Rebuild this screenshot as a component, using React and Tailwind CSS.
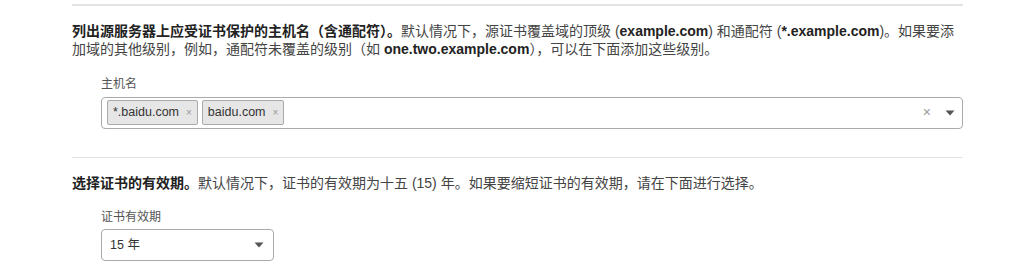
import React from "react";

const font = { fontFamily: '"Liberation Sans", "Noto Sans CJK SC", sans-serif' };

function Caret() {
  return (
    <svg width="10" height="6" viewBox="0 0 10 6" className="block">
      <path d="M0.5 0.5 L9.5 0.5 L5 5.5 Z" fill="#555" />
    </svg>
  );
}

function Tag({ label }) {
  return (
    <div className="flex items-center h-[25px] px-[5px] bg-[#e6e6e6] border border-[#aaaaaa] rounded-[2px] text-[12.5px] text-[#333]">
      <span>{label}</span>
      <span className="ml-[7px] text-[10px] text-[#999]">×</span>
    </div>
  );
}

export default function App() {
  return (
    <div className="w-[1024px] h-[274px] bg-white overflow-hidden" style={font}>
      <div className="ml-[72px] w-[891px] pt-[4px]">
        <div className="h-[1.5px] bg-[#e3e3e3]" />
        <p className="mt-[16px] text-[14px] leading-[18px] text-[#444]">
          <b className="text-[#222]">列出源服务器上应受证书保护的主机名（含通配符）。</b>
          默认情况下，源证书覆盖域的顶级 (<b className="text-[#222]">example.com</b>) 和通配符 (<b className="text-[#222]">*.example.com</b>)。如果要添加域的其他级别，例如，通配符未覆盖的级别（如 <b className="text-[#222]">one.two.example.com</b>），可以在下面添加这些级别。
        </p>
        <div className="ml-[29px] mt-[18px]">
          <div className="text-[12px] leading-[16px] text-[#555]">主机名</div>
          <div className="mt-[5px] h-[32px] border border-[#aaaaaa] rounded-[4px] flex items-center pl-[5px] pr-[7px]">
            <div className="flex gap-[4px] flex-1">
              <Tag label="*.baidu.com" />
              <Tag label="baidu.com" />
            </div>
            <span className="text-[14px] text-[#999] mr-[14px]">×</span>
            <Caret />
          </div>
        </div>
        <div className="mt-[28px] h-[1.5px] bg-[#e3e3e3]" />
        <p className="mt-[16px] text-[14px] leading-[18px] text-[#444]">
          <b className="text-[#222]">选择证书的有效期。</b>默认情况下，证书的有效期为十五 (15) 年。如果要缩短证书的有效期，请在下面进行选择。
        </p>
        <div className="ml-[29px] mt-[17px]">
          <div className="text-[12px] leading-[16px] text-[#555]">证书有效期</div>
          <div className="mt-[4px] w-[173px] h-[32px] border border-[#aaaaaa] rounded-[4px] flex items-center pl-[8px] pr-[9px] justify-between">
            <span className="text-[12.5px] text-[#333]">15 年</span>
            <Caret />
          </div>
        </div>
      </div>
    </div>
  );
}
